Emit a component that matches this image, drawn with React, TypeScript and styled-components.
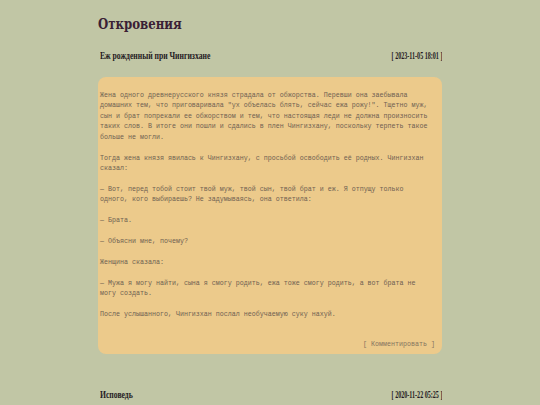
import React from 'react';
import styled, { createGlobalStyle } from 'styled-components';

interface IPost {
  title: string;
  date: string;
  body?: string[];
}

const posts: IPost[] = [
  {
    title: 'Еж рожденный при Чингизхане',
    date: '2023-11-05 18:01',
    body: [
      'Жена одного древнерусского князя страдала от обжорства. Перевши она заебывала домашних тем, что приговаривала "ух объелась блять, сейчас ежа рожу!". Тщетно муж, сын и брат попрекали ее обжорством и тем, что настоящая леди не должна произносить таких слов. В итоге они пошли и сдались в плен Чингизхану, поскольку терпеть такое больше не могли.',
      'Тогда жена князя явилась к Чингизхану, с просьбой освободить её родных. Чингизхан сказал:',
      '— Вот, перед тобой стоит твой муж, твой сын, твой брат и еж. Я отпущу только одного, кого выбираешь? Не задумываясь, она ответила:',
      '— Брата.',
      '— Объясни мне, почему?',
      'Женщина сказала:',
      '— Мужа я могу найти, сына я смогу родить, ежа тоже смогу родить, а вот брата не могу создать.',
      'После услышанного, Чингизхан послал необучаемую суку нахуй.'
    ]
  },
  {
    title: 'Исповедь',
    date: '2020-11-22 05:25'
  }
];

const GlobalStyle = createGlobalStyle`
  html, body {
    margin: 0;
    padding: 0;
    background: #c1c6a5;
  }
`;

const Page = styled.div`
  width: 344px;
  margin: 0 auto;
  height: 405px;
  overflow: hidden;
`;

const BlogTitle = styled.h1`
  display: inline-block;
  margin: 14px 0 15px;
  font-family: 'DejaVu Serif Condensed', 'DejaVu Serif', serif;
  font-size: 14.5px;
  line-height: 20px;
  font-weight: bold;
  color: #3a1f35;
  transform: scaleX(0.9);
  transform-origin: left center;
`;

const Post = styled.section`
  & + & {
    margin-top: 34px;
  }
`;

const PostHeader = styled.div`
  display: flex;
  justify-content: space-between;
  align-items: center;
  height: 14px;
  padding-left: 2px;
`;

const Squeezed = styled.span<{ $origin: string; $scale: number; $size: number }>`
  display: inline-block;
  font-family: 'Liberation Serif', serif;
  font-weight: bold;
  font-size: ${({ $size }) => $size}px;
  line-height: 14px;
  color: #241a22;
  white-space: nowrap;
  transform: scaleX(${({ $scale }) => $scale});
  transform-origin: ${({ $origin }) => $origin} center;
`;

const Card = styled.article`
  margin-top: 14px;
  padding: 13px 5px 5px 2px;
  border-radius: 8px;
  background: #ecca8b;
  font-family: 'Liberation Mono', monospace;
  font-size: 6.667px;
  line-height: 10.43px;
  color: #6f6152;
`;

const Text = styled.div`
  width: 334px;
`;

const Paragraph = styled.p`
  margin: 0;
  & + & {
    margin-top: 10.43px;
  }
`;

const CommentLink = styled.div`
  margin-top: 19.5px;
  padding-right: 2px;
  text-align: right;
  color: #85745f;
  white-space: pre;
`;

const App: React.FC = () => {
  return (
    <>
      <GlobalStyle />
      <Page>
        <BlogTitle>Откровения</BlogTitle>
        {posts.map((post) => (
          <Post key={post.date}>
            <PostHeader>
              <Squeezed $origin="left" $scale={0.73} $size={10.5}>{post.title}</Squeezed>
              <Squeezed $origin="right" $scale={0.64} $size={9.5}>[ {post.date} ]</Squeezed>
            </PostHeader>
            {post.body && (
              <Card>
                <Text>
                  {post.body.map((line, i) => (
                    <Paragraph key={i}>{line}</Paragraph>
                  ))}
                </Text>
                <CommentLink>[ Комментировать ]</CommentLink>
              </Card>
            )}
          </Post>
        ))}
      </Page>
    </>
  );
};

export default App;
